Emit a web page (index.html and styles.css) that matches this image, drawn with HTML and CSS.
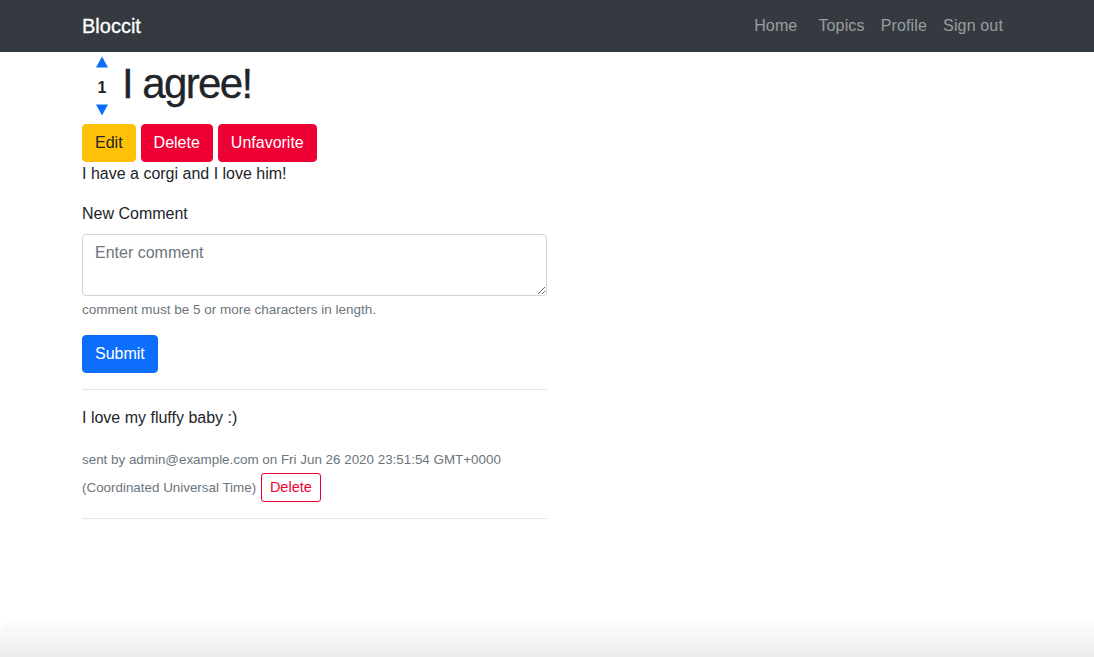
FILE: index.html
```html
<!DOCTYPE html>
<html lang="en">
<head>
<meta charset="utf-8">
<title>Bloccit</title>
<link rel="stylesheet" href="styles.css">
</head>
<body>
<nav class="navbar">
  <div class="container nav-inner">
    <a class="brand" href="#">Bloccit</a>
    <ul class="nav-links">
      <li><a class="nav-link home" href="#">Home</a></li>
      <li><a class="nav-link" href="#">Topics</a></li>
      <li><a class="nav-link" href="#">Profile</a></li>
      <li><a class="nav-link" href="#">Sign out</a></li>
    </ul>
  </div>
</nav>
<main class="container">
  <div class="post-head">
    <div class="vote">
      <a class="arrow up" href="#" aria-label="upvote"><svg width="12" height="12" viewBox="0 0 12 12"><polygon points="6,0.5 12,11.5 0,11.5" fill="#0d6efd"/></svg></a>
      <strong class="count">1</strong>
      <a class="arrow down" href="#" aria-label="downvote"><svg width="12" height="12" viewBox="0 0 12 12"><polygon points="0,0.5 12,0.5 6,11.5" fill="#0d6efd"/></svg></a>
    </div>
    <h1 class="title">I agree!</h1>
  </div>
  <div class="actions">
    <a class="btn btn-warning" href="#">Edit</a>
    <a class="btn btn-danger" href="#">Delete</a>
    <a class="btn btn-danger" href="#">Unfavorite</a>
  </div>
  <p class="body-text">I have a corgi and I love him!</p>
  <div class="col">
    <form class="comment-form">
      <div class="form-group">
        <label class="label" for="c">New Comment</label>
        <textarea id="c" class="form-control" rows="2" placeholder="Enter comment"></textarea>
        <small class="help">comment must be 5 or more characters in length.</small>
      </div>
      <button type="button" class="btn btn-primary">Submit</button>
    </form>
    <hr class="rule">
    <div class="comment">
      <p class="comment-body">I love my fluffy baby :)</p>
      <p class="meta">sent by admin@example.com on Fri Jun 26 2020 23:51:54 GMT+0000 (Coordinated Universal Time) <a class="btn btn-sm btn-outline-danger" href="#">Delete</a></p>
    </div>
    <hr class="rule">
  </div>
</main>
<div class="bottom-shade"></div>
</body>
</html>
```

FILE: styles.css
```css
* { box-sizing: border-box; }
html, body { margin: 0; padding: 0; }
body {
  font-family: "Liberation Sans", Arial, sans-serif;
  font-size: 16px;
  line-height: 1.5;
  color: #212529;
  background: #fff;
}
a { text-decoration: none; }
.container {
  width: 960px;
  margin: 0 auto;
  padding: 0 15px;
}
.navbar {
  background: #343a40;
  height: 52px;
}
.nav-inner {
  display: flex;
  align-items: center;
  justify-content: space-between;
  height: 52px;
}
.brand {
  color: #fff;
  font-size: 20px;
  line-height: 30px;
  -webkit-text-stroke: 0.3px #fff;
}
.nav-links {
  list-style: none;
  margin: 0 1px 0 0;
  padding: 0;
  display: flex;
}
.nav-link {
  display: block;
  padding: 0 8px;
  color: rgba(255,255,255,.5);
  line-height: 24px;
  font-size: 16px;
  letter-spacing: 0.15px;
}
.nav-link.home { margin-right: 5px; }

.post-head {
  display: flex;
  align-items: center;
}
.vote {
  width: 40px;
  display: flex;
  flex-direction: column;
  align-items: center;
  padding-top: 4px;
}
.arrow {
  display: block;
  width: 12px;
  height: 12px;
  line-height: 0;
}
.arrow.up { margin-bottom: 8px; }
.arrow.down { margin-top: 4px; }
.count {
  font-size: 16px;
  line-height: 24px;
  font-weight: 700;
}
.title {
  margin: 0;
  font-size: 42px;
  font-weight: 400;
  letter-spacing: -1.6px;
  line-height: 48px;
  -webkit-text-stroke: 0.3px #212529;
}
.actions {
  display: flex;
  gap: 5px;
  margin-top: 8px;
}
.btn {
  display: inline-block;
  font-family: inherit;
  font-size: 16px;
  line-height: 24px;
  padding: 6px 12px;
  border: 1px solid transparent;
  border-radius: 4px;
  cursor: pointer;
}
.btn-warning { background: #ffc107; border-color: #ffc107; color: #212529; }
.btn-danger { background: #ef0034; border-color: #ef0034; color: #fff; }
.btn-primary { background: #0d6efd; border-color: #0d6efd; color: #fff; }
.btn-sm {
  font-size: 14.5px;
  line-height: 21px;
  padding: 3px 8px;
  border-radius: 3px;
  margin-left: 1px;
}
.btn-outline-danger { color: #ef0034; border-color: #ef0034; background: transparent; }

.body-text { margin: 0 0 16px; }
.col { width: 465px; }
.comment-form { margin: 0; }
.form-group { margin-bottom: 16px; }
.label { display: block; margin-bottom: 8px; }
.form-control {
  display: block;
  width: 100%;
  height: 62px;
  padding: 6px 12px;
  font-family: inherit;
  font-size: 16px;
  line-height: 24px;
  color: #495057;
  border: 1px solid #ced4da;
  border-radius: 4px;
  resize: vertical;
  margin: 0;
}
.form-control::placeholder { color: #6c757d; opacity: 1; }
.help {
  display: block;
  margin-top: 4px;
  font-size: 13.5px;
  line-height: 19px;
  color: #6c757d;
}
.rule {
  margin: 16px 0;
  border: 0;
  border-top: 1px solid rgba(0,0,0,.1);
  height: 0;
}
.comment-body { margin: 0 0 16px; }
.meta {
  margin: 0;
  font-size: 13.4px;
  line-height: 27px;
  color: #6c757d;
}
.bottom-shade {
  position: fixed;
  left: 0;
  right: 0;
  bottom: 0;
  height: 40px;
  background: linear-gradient(to bottom, rgba(0,0,0,0), rgba(0,0,0,.075));
  border-top-left-radius: 16px;
  pointer-events: none;
}
```
